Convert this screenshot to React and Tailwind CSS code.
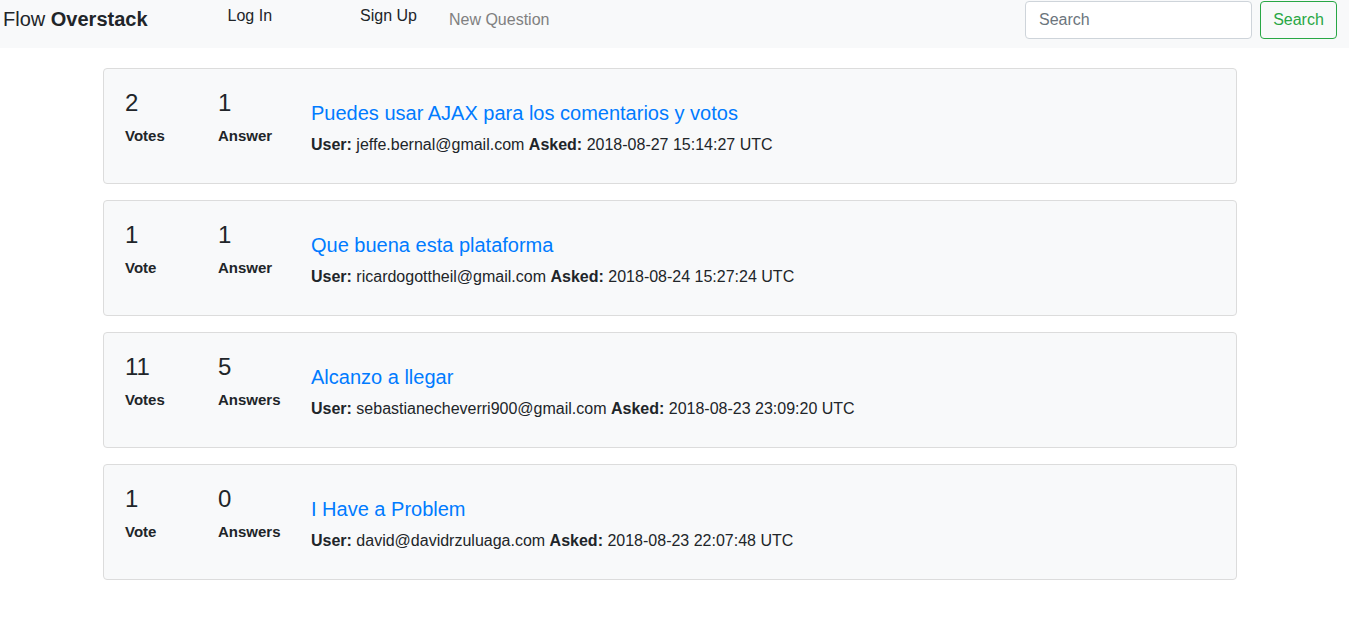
import { useState } from "react";

const questions = [
  {
    votes: 2,
    answers: 1,
    title: "Puedes usar AJAX para los comentarios y votos",
    user: "jeffe.bernal@gmail.com",
    asked: "2018-08-27 15:14:27 UTC",
  },
  {
    votes: 1,
    answers: 1,
    title: "Que buena esta plataforma",
    user: "ricardogottheil@gmail.com",
    asked: "2018-08-24 15:27:24 UTC",
  },
  {
    votes: 11,
    answers: 5,
    title: "Alcanzo a llegar",
    user: "sebastianecheverri900@gmail.com",
    asked: "2018-08-23 23:09:20 UTC",
  },
  {
    votes: 1,
    answers: 0,
    title: "I Have a Problem",
    user: "david@davidrzuluaga.com",
    asked: "2018-08-23 22:07:48 UTC",
  },
];

function Navbar() {
  const [query, setQuery] = useState("");
  return (
    <nav className="h-[48px] bg-[#f8f9fa] flex items-start">
      {/* brand */}
      <a href="#" className="ml-[3px] mt-[7px] text-[20px] leading-[24px] text-[#212529]">
        Flow <strong className="font-bold">Overstack</strong>
      </a>

      {/* links */}
      <a href="#" className="ml-[80px] mt-[4px] text-[16px] leading-[24px] text-[#212529]">
        Log In
      </a>
      <a href="#" className="ml-[88px] mt-[4px] text-[16px] leading-[24px] text-[#212529]">
        Sign Up
      </a>
      <a href="#" className="ml-[32px] mt-[8px] text-[16px] leading-[24px] text-[#808080]">
        New Question
      </a>

      {/* search */}
      <form
        className="ml-auto mr-[12px] mt-[1px] flex gap-[8px]"
        onSubmit={(e) => e.preventDefault()}
      >
        <input
          type="search"
          placeholder="Search"
          value={query}
          onChange={(e) => setQuery(e.target.value)}
          className="w-[227px] h-[38px] px-[13px] bg-white border border-[#ced4da] rounded-[4px] text-[16px] text-[#495057] placeholder:text-[#6c757d] outline-none"
        />
        <button
          type="submit"
          className="w-[77px] h-[38px] border border-[#28a745] rounded-[4px] text-[16px] text-[#28a745] bg-transparent"
        >
          Search
        </button>
      </form>
    </nav>
  );
}

function QuestionCard({ q }) {
  return (
    <div className="h-[116px] bg-[#f8f9fa] border border-[#dcdcdc] rounded-[4px] flex px-[20px] pt-[19px]">
      {/* votes */}
      <div className="w-[94px] pl-[1px]">
        <div className="text-[24px] leading-[29px] text-[#212529]">{q.votes}</div>
        <div className="mt-[10px] text-[15px] leading-[18px] font-bold text-[#212529]">
          {q.votes === 1 ? "Vote" : "Votes"}
        </div>
      </div>

      {/* answers */}
      <div className="w-[93px]">
        <div className="text-[24px] leading-[29px] text-[#212529]">{q.answers}</div>
        <div className="mt-[10px] text-[15px] leading-[18px] font-bold text-[#212529]">
          {q.answers === 1 ? "Answer" : "Answers"}
        </div>
      </div>

      {/* question */}
      <div className="pt-[13px]">
        <a href="#" className="block text-[20px] leading-[24px] text-[#007bff]">
          {q.title}
        </a>
        <p className="mt-[10px] text-[16px] leading-[19px] text-[#212529]">
          <strong className="font-bold">User:</strong> {q.user}{" "}
          <strong className="font-bold">Asked:</strong> {q.asked}
        </p>
      </div>
    </div>
  );
}

export default function App() {
  return (
    <div className="min-h-[618px] bg-white font-['Liberation_Sans',Arial,sans-serif] text-[#212529]">
      <Navbar />
      <div className="w-[1134px] ml-[103px] mt-[20px] flex flex-col gap-[16px]">
        {questions.map((q, index) => (
          <QuestionCard key={index} q={q} />
        ))}
      </div>
    </div>
  );
}
